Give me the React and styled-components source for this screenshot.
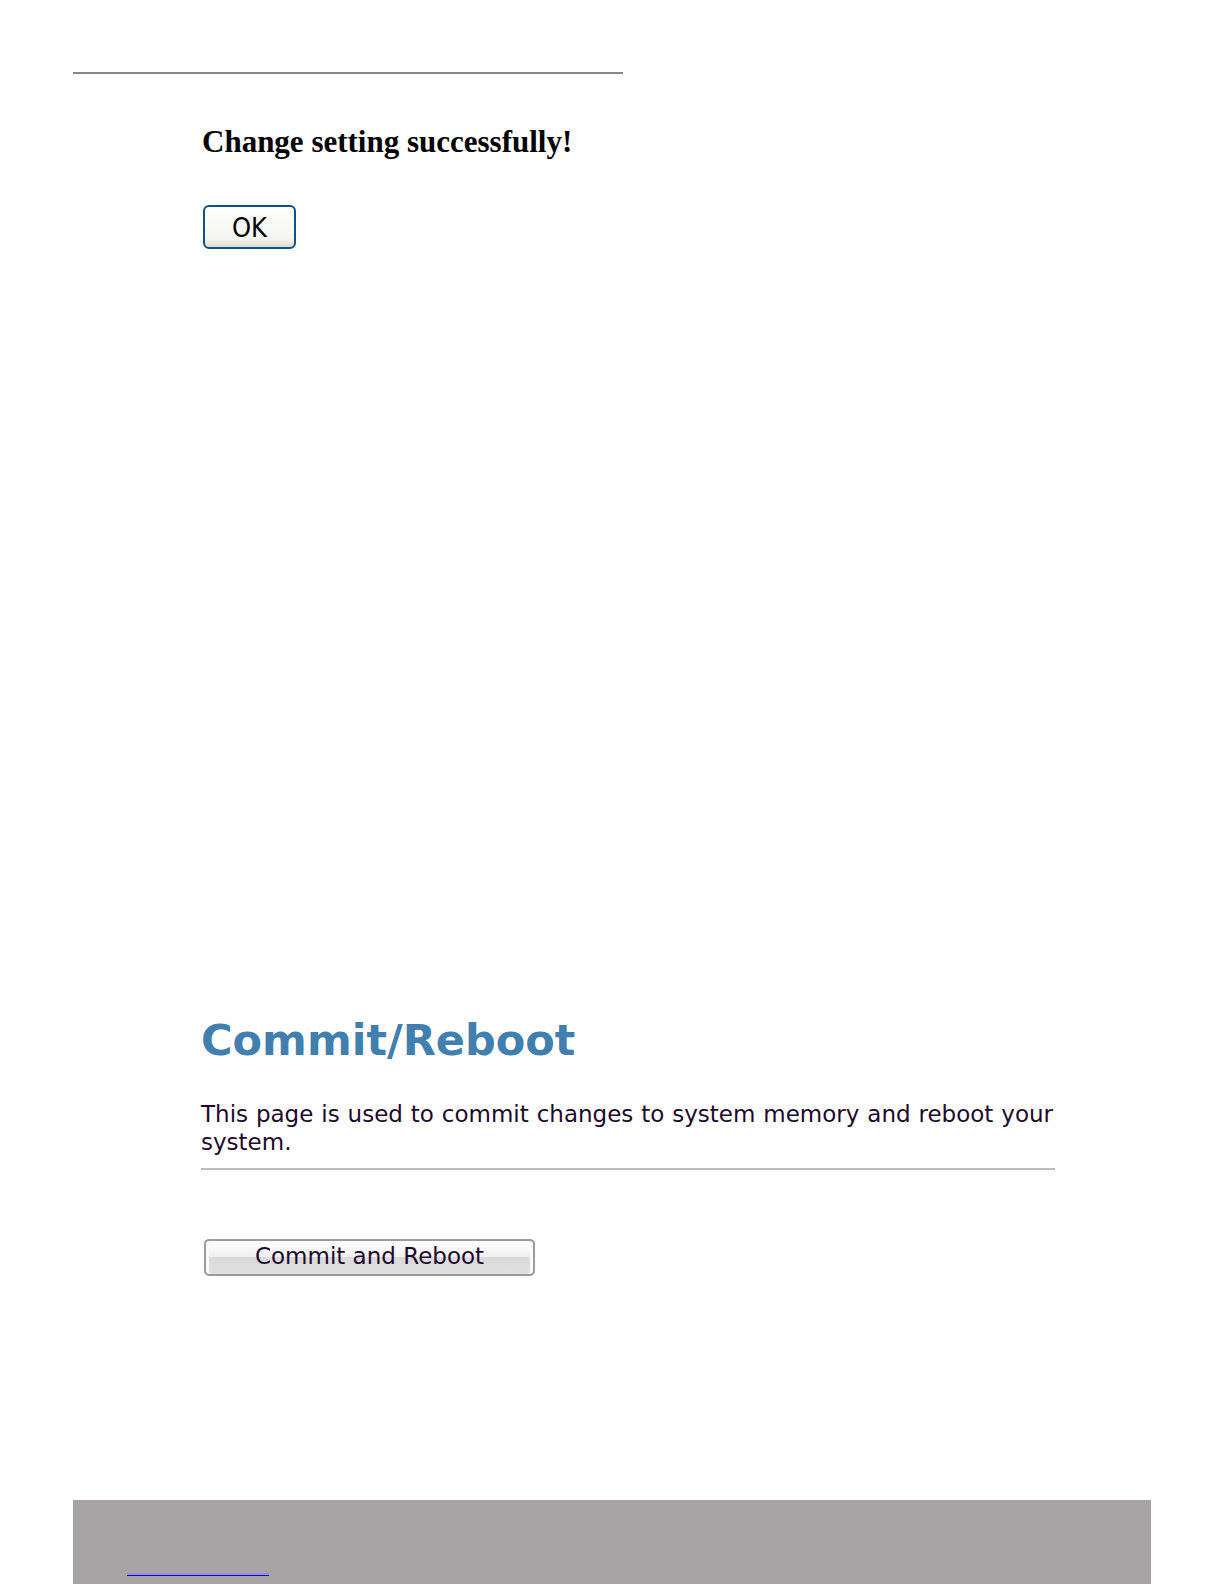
import React from 'react';
import styled, { createGlobalStyle } from 'styled-components';

const GlobalStyle = createGlobalStyle`
    body {
        margin: 0;
        background-color: #fefefe;
    }
`

const Page = styled.div`
    display: flex;
    flex-direction: column;
    min-height: 100vh;
    box-sizing: border-box;
    padding: 72px 73px 0;
`

const TopRule = styled.div`
    width: 51%;
    height: 2px;
    background-color: #868686;
`

const Section = styled.section`
    display: flex;
    flex-direction: column;
    align-items: flex-start;
    padding: 0 96px 0 128px;
`

const SuccessSection = styled(Section)`
    padding-top: 48px;
`

const CommitSection = styled(Section)`
    margin-top: auto;
    padding-bottom: 224px;
`

const Message = styled.p`
    margin: 0 0 43px;
    padding-left: 1px;
    color: #000;
    font: bold 31px/40px "Liberation Serif", serif;
`

const OkButton = styled.button`
    width: 93px;
    height: 44px;
    margin-left: 2px;
    padding: 2px 0 0;
    border: 2px solid #0f5287;
    border-radius: 6px;
    background: linear-gradient(#fff, #f4f4f0 80%, #dcdad2);
    color: #000;
    font: 27px/36px "DejaVu Sans Condensed", "DejaVu Sans", sans-serif;
`

const Title = styled.h1`
    margin: 0 0 34px;
    color: #417fae;
    font: bold 43px/52px "DejaVu Sans", sans-serif;
`

const Description = styled.p`
    align-self: stretch;
    margin: 0;
    padding: 0 2px 12px 0;
    border-bottom: 2px solid #bcbcbc;
    color: #1e0a2c;
    font: 23px/28px "DejaVu Sans", sans-serif;
    text-align: justify;
`

const CommitButton = styled.button`
    width: 331px;
    height: 37px;
    margin: 69px 0 0 3px;
    padding: 0 0 4px;
    border: 2px solid #9b9b9b;
    border-radius: 5px;
    background: linear-gradient(#fff, #f0f0f0 48%, #dadada 50%, #e0e0e0);
    box-shadow: inset 3px 0 #fafafa, inset -3px 0 #fafafa;
    color: #1e0a2c;
    font: 23px/28px "DejaVu Sans", sans-serif;
`

const Footer = styled.footer`
    height: 84px;
    padding-left: 54px;
    box-sizing: border-box;
    background-color: #a6a4a5;
`

const FooterLink = styled.a`
    display: block;
    width: 142px;
    height: 73px;
    border-bottom: 2px solid #8f8ffa;
    box-shadow: 0 1px #0a0aa4;
`

const App = () => {
    return (
        <>
            <GlobalStyle />
            <Page>
                <TopRule />
                <SuccessSection>
                    <Message>Change setting successfully!</Message>
                    <OkButton type="button">OK</OkButton>
                </SuccessSection>
                <CommitSection>
                    <Title>Commit/Reboot</Title>
                    <Description>
                        This page is used to commit changes to system memory and reboot your system.
                    </Description>
                    <CommitButton type="button">Commit and Reboot</CommitButton>
                </CommitSection>
                <Footer>
                    <FooterLink href="#" aria-label="Home" />
                </Footer>
            </Page>
        </>
    );
};

export default App;
